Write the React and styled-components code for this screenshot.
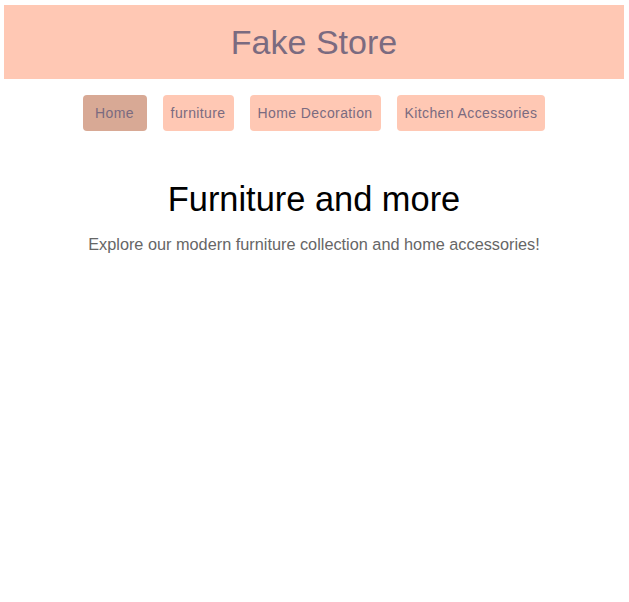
import React from 'react';
import styled, { createGlobalStyle } from 'styled-components';

const GlobalStyle = createGlobalStyle`
    body {
        margin: 0;
        background: #ffffff;
        font-family: "Liberation Sans", Arial, sans-serif;
    }
`;

const Page = styled.div`
    padding: 5px 5px 0 4px;
`;

const Header = styled.header`
    height: 74px;
    background-color: #ffc8b4;
    display: flex;
    align-items: center;
    justify-content: center;
`;

const StoreName = styled.h1`
    margin: 0;
    font-size: 34px;
    font-weight: 400;
    color: #7b6b80;
`;

const Nav = styled.nav`
    display: flex;
    justify-content: center;
    gap: 16px;
    padding-top: 16px;
`;

const NavButton = styled.button`
    min-width: 64px;
    height: 36px;
    padding: 0 8px;
    border: none;
    border-radius: 4px;
    background-color: ${props => (props.active ? '#d8a995' : '#ffc8b4')};
    color: #7b6b80;
    font-family: "Liberation Sans", Arial, sans-serif;
    font-size: 14px;
    letter-spacing: 0.4px;
    cursor: pointer;
`;

const Hero = styled.section`
    display: flex;
    flex-direction: column;
    align-items: center;
    padding-top: 49px;
`;

const Title = styled.h2`
    margin: 0;
    font-size: 34.4px;
    font-weight: 400;
    color: #000000;
`;

const Subtitle = styled.p`
    margin: 16px 0 0;
    font-size: 16.3px;
    color: #666666;
`;

const links = ['Home', 'furniture', 'Home Decoration', 'Kitchen Accessories'];

const App = () => <>
        <GlobalStyle />
        <Page>
            <Header>
                <StoreName>Fake Store</StoreName>
            </Header>
            <Nav>
                {links.map(link =>
                    <NavButton key={link} active={link === 'Home'}>{link}</NavButton>)}
            </Nav>
            <Hero>
                <Title>Furniture and more</Title>
                <Subtitle>Explore our modern furniture collection and home accessories!</Subtitle>
            </Hero>
        </Page>
    </>

export default App;
